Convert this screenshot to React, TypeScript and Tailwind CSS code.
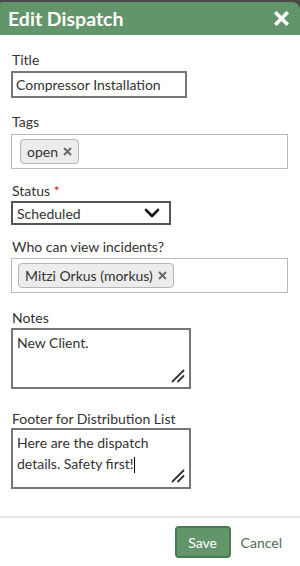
import React from "react";

const Resize = () => (
  <svg className="absolute right-[4px] bottom-[4px]" width="14" height="14" viewBox="0 0 14 14">
    <line x1="1.5" y1="12.5" x2="12.5" y2="1.5" stroke="#333" strokeWidth="1.8" strokeLinecap="round" />
    <line x1="7" y1="12.5" x2="12.5" y2="7" stroke="#333" strokeWidth="1.8" strokeLinecap="round" />
  </svg>
);

const Chip = ({ children }: { children: React.ReactNode }) => (
  <span className="inline-flex items-center h-[25px] px-[6px] gap-[5px] rounded-[4px] border border-[#b5b5b5] bg-[#ececec] text-[#333] text-[14px]">
    {children}
    <svg width="9" height="9" viewBox="0 0 9 9">
      <path d="M1 1L8 8M8 1L1 8" stroke="#666" strokeWidth="1.8" />
    </svg>
  </span>
);

export default function App() {
  return (
    <div className="w-[300px] h-[566px] bg-white text-[#333] overflow-hidden" style={{ fontFamily: "Lato, 'Liberation Sans', sans-serif" }}>
      <div className="bg-[#4a4a4a] pt-[2px]">
        <div className="h-[33px] bg-[#62956a] rounded-tr-[8px] rounded-tl-[2px] flex items-center justify-between pl-[8px] pr-[11px]">
          <span className="text-white font-bold text-[19.5px] leading-none">Edit Dispatch</span>
          <svg width="15" height="15" viewBox="0 0 15 15">
            <path d="M2.5 2.5L12.5 12.5M12.5 2.5L2.5 12.5" stroke="white" strokeWidth="3.6" strokeLinecap="square" />
          </svg>
        </div>
      </div>

      <div className="px-[11px] pt-[17px] flex flex-col">
        <label className="text-[14px] leading-[16px] px-[1px]">Title</label>
        <div className="mt-[3px] w-[176px] h-[27px] border-2 border-[#777] flex items-center px-[3px] text-[14px]">
          Compressor Installation
        </div>

        <label className="mt-[16px] text-[14px] leading-[16px] px-[1px]">Tags</label>
        <div className="mt-[4px] w-[277px] h-[35px] border border-[#bbb] flex items-center px-[8px]">
          <Chip>open</Chip>
        </div>

        <label className="mt-[14px] text-[14px] leading-[16px] px-[1px]">
          Status <span className="text-[#e02020]">*</span>
        </label>
        <div className="mt-[2px] w-[160px] h-[24px] border-2 border-[#555] flex items-center justify-between pl-[4px] pr-[9px] text-[14px]">
          <span>Scheduled</span>
          <svg width="16" height="10" viewBox="0 0 16 10">
            <path d="M2 2L8 8L14 2" stroke="#111" strokeWidth="2.6" fill="none" strokeLinecap="round" strokeLinejoin="round" />
          </svg>
        </div>

        <label className="mt-[14px] text-[14px] leading-[16px] px-[1px]">Who can view incidents?</label>
        <div className="mt-[3px] w-[277px] h-[35px] border border-[#bbb] flex items-center px-[6px]">
          <Chip>Mitzi Orkus (morkus)</Chip>
        </div>

        <label className="mt-[17px] text-[14px] leading-[16px] px-[1px]">Notes</label>
        <div className="relative mt-[2px] w-[180px] h-[61px] border-2 border-[#777] px-[4px] pt-[2px] text-[14px] leading-[21px]">
          New Client.
          <Resize />
        </div>

        <label className="mt-[22px] text-[14px] leading-[16px] px-[1px]">Footer for Distribution List</label>
        <div className="relative mt-[1px] w-[180px] h-[61px] border-2 border-[#777] pl-[4px] pr-[8px] pt-[2px] text-[14px] leading-[21px]">
          Here are the dispatch details. Safety first!
          <span className="inline-block w-[1px] h-[16px] bg-black align-middle" />
          <Resize />
        </div>
      </div>

      <div className="mt-[27px] border-t-2 border-[#e6e6e6] flex items-center justify-end pr-[18px] pt-[8px] gap-[10px]">
        <button className="w-[56px] h-[32px] rounded-[4px] bg-[#62956a] border-2 border-[#4a7a52] text-white text-[14px]">
          Save
        </button>
        <span className="text-[14px] text-[#4f6d58]">Cancel</span>
      </div>
    </div>
  );
}
